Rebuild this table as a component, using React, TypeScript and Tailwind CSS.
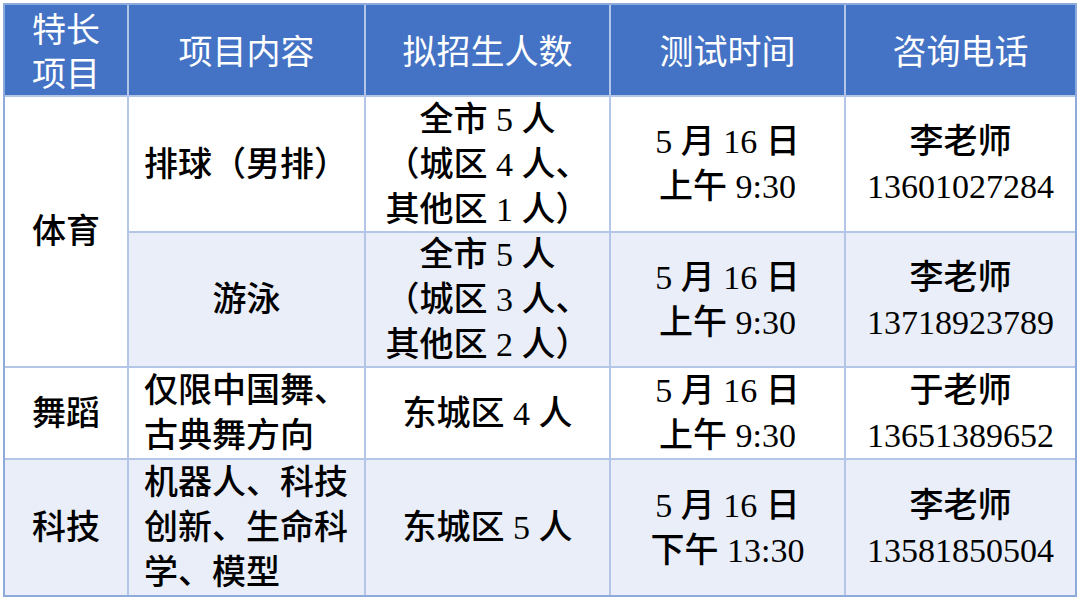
import type { ReactNode } from 'react';

/**
 * 特长生招生表 — a five-column Word-style table: blue header band,
 * light-blue zebra rows, thin pale grid lines.
 */

const BODY_FONT = '"Liberation Serif", "Noto Sans CJK SC", serif';
const HEAD_FONT = '"Noto Sans CJK SC", "Noto Sans", sans-serif';

function Head({ children, className = '' }: { children: ReactNode; className?: string }) {
  return (
    <div
      className={`flex items-center justify-center bg-[#4472C4] text-center text-[34px] leading-[44px] text-white ${className}`}
      style={{ fontFamily: HEAD_FONT }}
    >
      <div>{children}</div>
    </div>
  );
}

function Cell({
  children,
  tint = false,
  align = 'center',
  className = '',
}: {
  children: ReactNode;
  tint?: boolean;
  align?: 'center' | 'left';
  className?: string;
}) {
  return (
    <div
      className={`flex items-center text-[34px] font-medium leading-[45px] text-black ${
        tint ? 'bg-[#E9EEF8]' : 'bg-white'
      } ${align === 'left' ? 'justify-start pl-[15px] text-left' : 'justify-center text-center'} ${className}`}
      style={{ fontFamily: BODY_FONT }}
    >
      <div>{children}</div>
    </div>
  );
}

export default function App() {
  return (
    <div className="h-[601px] w-[1080px] bg-white pl-[3px] pt-[3px]">
      <div className="w-[1074px] border-2 border-[#8EAADB]">
        <div className="grid grid-cols-[122px_235px_243px_233px_229px] grid-rows-[90px_134px_133px_90px_135px] gap-[2px] bg-[#B4C6E7]">
          {/* header */}
          <Head>
            特长
            <br />
            项目
          </Head>
          <Head>项目内容</Head>
          <Head>拟招生人数</Head>
          <Head>测试时间</Head>
          <Head>咨询电话</Head>

          {/* 体育 spans two rows */}
          <Cell className="row-span-2">体育</Cell>
          <Cell align="left">排球（男排）</Cell>
          <Cell>
            全市 5 人
            <br />
            （城区 4 人、
            <br />
            其他区 1 人）
          </Cell>
          <Cell>
            5 月 16 日
            <br />
            上午 9:30
          </Cell>
          <Cell>
            李老师
            <br />
            13601027284
          </Cell>

          <Cell tint>游泳</Cell>
          <Cell tint>
            全市 5 人
            <br />
            （城区 3 人、
            <br />
            其他区 2 人）
          </Cell>
          <Cell tint>
            5 月 16 日
            <br />
            上午 9:30
          </Cell>
          <Cell tint>
            李老师
            <br />
            13718923789
          </Cell>

          {/* 舞蹈 */}
          <Cell>舞蹈</Cell>
          <Cell align="left">
            仅限中国舞、
            <br />
            古典舞方向
          </Cell>
          <Cell>东城区 4 人</Cell>
          <Cell>
            5 月 16 日
            <br />
            上午 9:30
          </Cell>
          <Cell>
            于老师
            <br />
            13651389652
          </Cell>

          {/* 科技 */}
          <Cell tint>科技</Cell>
          <Cell tint align="left">
            机器人、科技
            <br />
            创新、生命科
            <br />
            学、模型
          </Cell>
          <Cell tint>东城区 5 人</Cell>
          <Cell tint>
            5 月 16 日
            <br />
            下午 13:30
          </Cell>
          <Cell tint>
            李老师
            <br />
            13581850504
          </Cell>
        </div>
      </div>
    </div>
  );
}
